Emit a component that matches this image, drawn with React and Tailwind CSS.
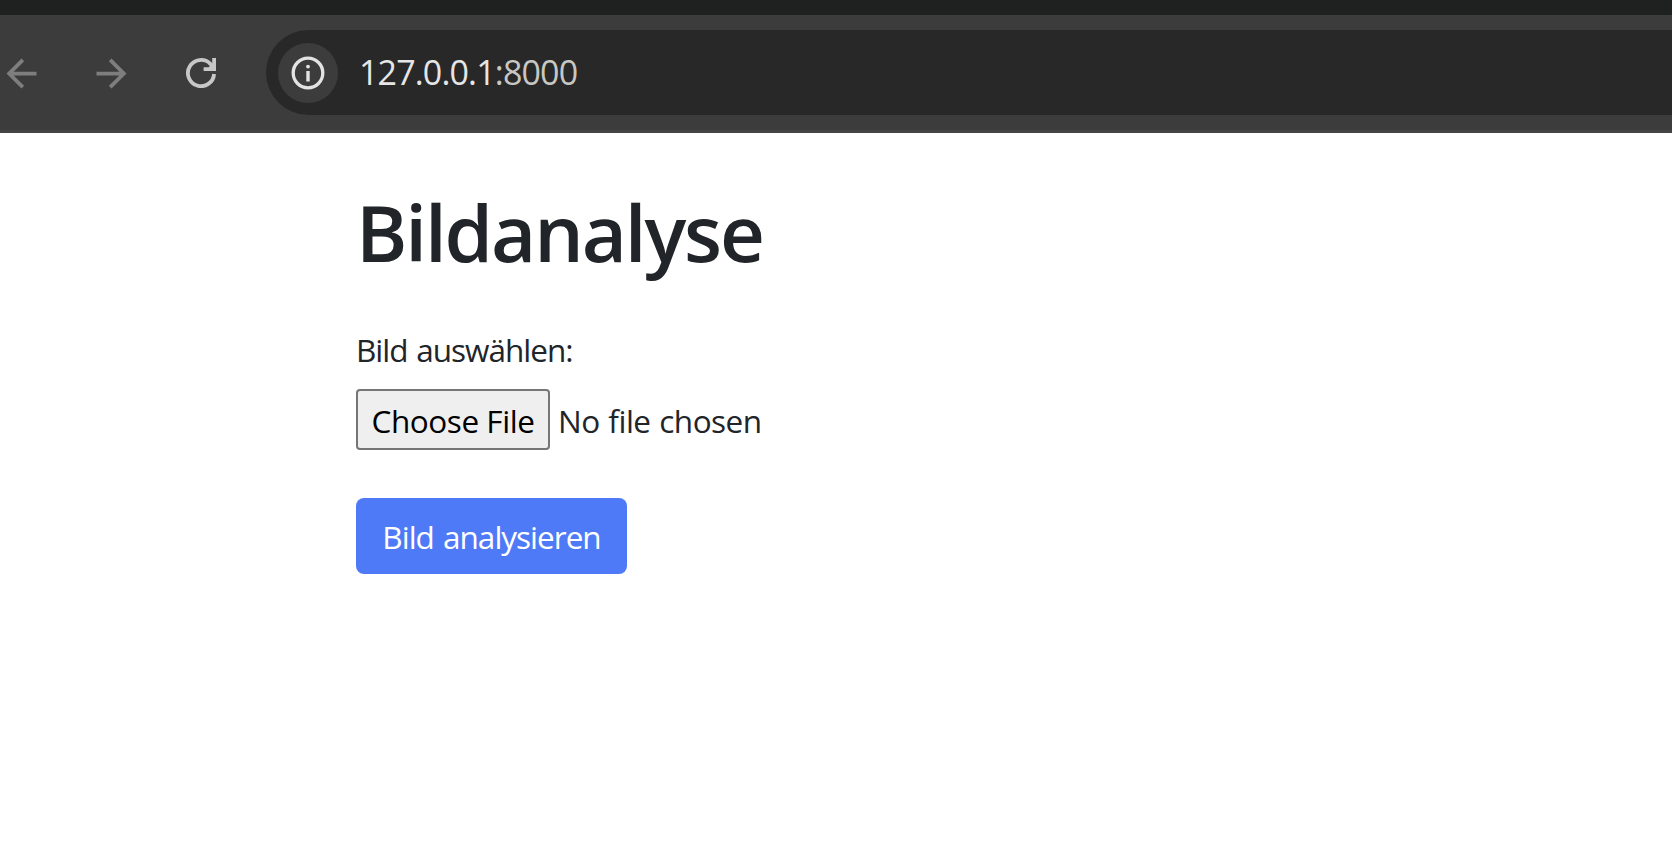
function ArrowIcon({ className }) {
  return (
    <svg viewBox="0 0 24 24" className={className} fill="#7e7e7e">
      <path d="M20 11H7.83l5.59-5.59L12 4l-8 8 8 8 1.41-1.41L7.83 13H20v-2z" />
    </svg>
  );
}

function ReloadIcon() {
  return (
    <svg viewBox="0 0 30 30" className="h-[30px] w-[30px] shrink-0">
      <path d="M28.1 16A13.1 13.1 0 1 1 24.3 5.8L27 8.5" fill="none" stroke="#c7c7c7" strokeWidth="3.8" />
      <path d="M26.2 0H30V13H17.6V9.2H22.6L26.2 6Z" fill="#c7c7c7" />
    </svg>
  );
}

function InfoIcon() {
  return (
    <svg viewBox="0 0 34 34" className="h-[34px] w-[34px]" fill="#e3e3e3">
      <circle cx="17" cy="17" r="14.8" fill="none" stroke="#e3e3e3" strokeWidth="3.3" />
      <circle cx="17" cy="10.6" r="1.9" />
      <rect x="15.3" y="15" width="3.4" height="10.5" />
    </svg>
  );
}

export default function App() {
  return (
    <div className="h-[855px] w-full overflow-hidden bg-white font-['Open_Sans','Noto_Sans',sans-serif] text-[#212529]">
      <header>
        <div className="h-[15px] bg-[#1f2120]" />
        <div className="flex h-[118px] items-start border-b-[3px] border-[#454445] bg-[#3c3c3c] pt-[15px]">
          <div className="flex h-[86px] items-center">
            <ArrowIcon className="-ml-[1.5px] h-[45px] w-[45px] shrink-0" />
            <ArrowIcon className="ml-[45px] h-[45px] w-[45px] shrink-0 rotate-180" />
            <div className="ml-[52.5px]">
              <ReloadIcon />
            </div>
          </div>
          <div className="ml-[50px] flex h-[85px] flex-1 items-center rounded-l-full bg-[#282828] pl-[12px]">
            <div className="flex h-[60px] w-[60px] items-center justify-center rounded-full bg-[#3c3c3c]">
              <InfoIcon />
            </div>
            <div className="ml-[21px] pb-[2px] text-[34px] leading-[48px] tracking-[-0.85px] text-[#e6e6e6]">
              127.0.0.1<span className="text-[#c7c7c4]">:8000</span>
            </div>
          </div>
        </div>
      </header>
      <main className="flex flex-col items-start pl-[356px] pt-[45px]">
        <h1 className="text-[78px] font-semibold leading-[108px] tracking-[-2.1px]">Bildanalyse</h1>
        <label className="mt-[40px] text-[31.5px] leading-[48px] tracking-[-1px] [word-spacing:1.5px]">Bild auswählen:</label>
        <div className="mt-[15px] flex items-center text-[31.5px]">
          <button className="h-[61px] w-[194px] whitespace-nowrap rounded-[4px] border-2 border-[#767676] bg-[#efefef] pt-[2px] leading-[56px] tracking-[-0.45px] text-black">
            Choose File
          </button>
          <span className="ml-[8px] pt-[2px] tracking-[-0.5px] [word-spacing:1px]">No file chosen</span>
        </div>
        <button className="mt-[48px] h-[76px] w-[271px] whitespace-nowrap rounded-[8px] bg-[#4f7af7] pt-px text-[31.5px] tracking-[-1px] text-white [word-spacing:2px]">
          Bild analysieren
        </button>
      </main>
    </div>
  );
}
